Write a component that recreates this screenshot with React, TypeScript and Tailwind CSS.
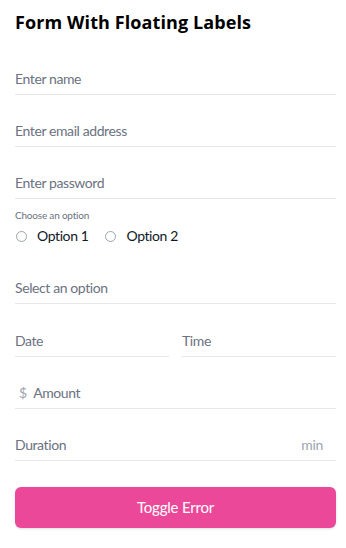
import React from "react";

const font = { fontFamily: 'Lato, "Noto Sans", sans-serif' };
const titleFont = { fontFamily: '"Open Sans", "Noto Sans", sans-serif' };

function Field({ label, left, right, className = "" }: { label: string; left?: string; right?: string; className?: string }) {
  return (
    <div className={`h-[52px] border-b border-[#e5e7eb] flex items-end pb-[5px] ${className}`}>
      {left && <span className="text-[14px] leading-[20px] text-[#9ca3af] pl-[4px] pr-[6px]">{left}</span>}
      <span className="flex-1 text-[14px] leading-[20px] text-[#6b7280] tracking-[-0.4px]">{label}</span>
      {right && <span className="text-[14px] leading-[20px] text-[#9ca3af] pr-[13px] tracking-[-0.3px]">{right}</span>}
    </div>
  );
}

function Radio({ label }: { label: string }) {
  return (
    <label className="flex items-center gap-[10px]">
      <span className="w-[11px] h-[11px] rounded-full border border-[#9ca3af] bg-white" />
      <span className="text-[14px] leading-[20px] text-[#111827] tracking-[-0.4px]">{label}</span>
    </label>
  );
}

export default function App() {
  return (
    <div className="w-[346px] h-[548px] bg-white pl-[15px] pr-[10px] pt-[8px]" style={font}>
      <h1 className="text-[18px] leading-[28px] font-bold text-black h-[35px] tracking-[0.1px]" style={titleFont}>Form With Floating Labels</h1>
      <Field label="Enter name" />
      <Field label="Enter email address" />
      <Field label="Enter password" />
      <div className="pt-[9px] pb-[6px]">
        <div className="text-[10px] leading-[14px] text-[#6b7280] tracking-[-0.2px]">Choose an option</div>
        <div className="flex items-center gap-[17px] mt-[4px] pl-px">
          <Radio label="Option 1" />
          <Radio label="Option 2" />
        </div>
      </div>
      <Field label="Select an option" />
      <div className="grid grid-cols-2 gap-[13px] mt-px">
        <Field label="Date" />
        <Field label="Time" />
      </div>
      <Field label="Amount" left="$" />
      <Field label="Duration" right="min" />
      <button className="mt-[26px] w-full h-[41px] rounded-md bg-[#ec4899] text-white text-[15px] tracking-[-0.2px] shadow-sm">
        Toggle Error
      </button>
    </div>
  );
}
